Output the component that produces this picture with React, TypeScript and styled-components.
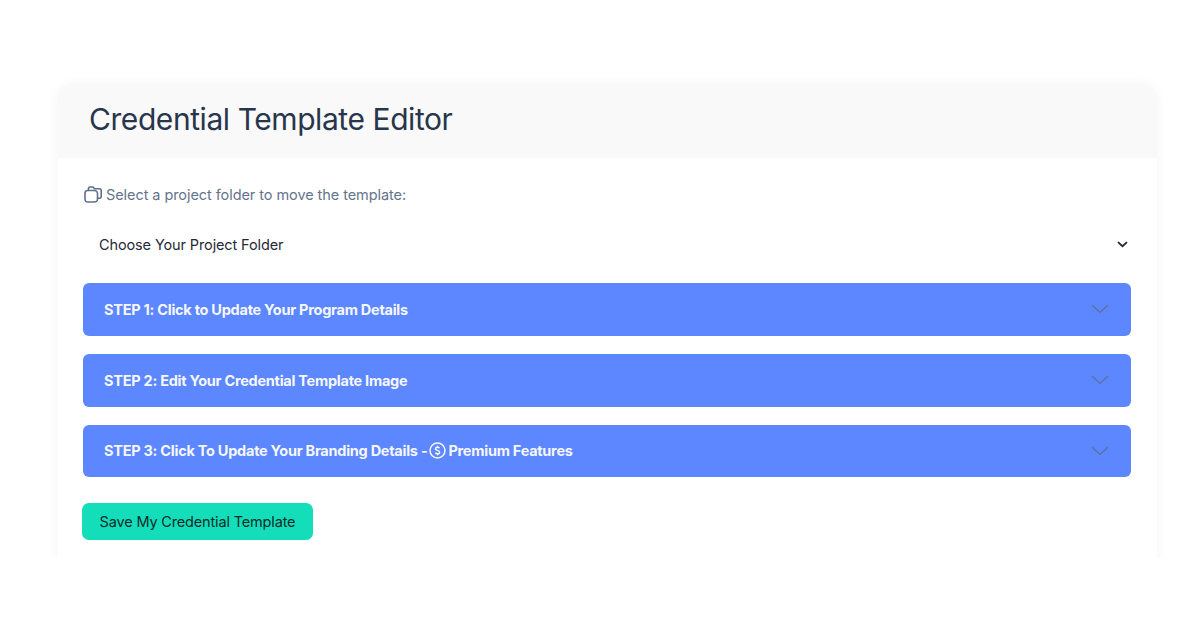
import React from "react";
import styled, { createGlobalStyle } from "styled-components";

const Global = createGlobalStyle`
  html, body { margin: 0; padding: 0; background: #fff; }
  body { font-family: "Inter", "Open Sans", sans-serif; }
`;

const Viewport = styled.div`
  height: 558px;
  overflow: hidden;
  padding: 84px 43px 0 58px;
  box-sizing: border-box;
`;

const Card = styled.section`
  height: 520px;
  background: #fff;
  border-radius: 14px 14px 0 0;
  box-shadow: 0 0 12px rgba(30, 40, 60, 0.04);
`;

const Header = styled.header`
  height: 74px;
  box-sizing: border-box;
  background: #f9f9fa;
  border-radius: 14px 14px 0 0;
  display: flex;
  align-items: center;
  padding: 0 0 4px 31px;
`;

const Title = styled.h1`
  margin: 0;
  font-size: 30px;
  font-weight: 400;
  letter-spacing: -0.43px;
  color: #27364b;
`;

const Body = styled.div`
  padding: 25px 26px 0 25px;
`;

const FolderLabel = styled.div`
  display: flex;
  align-items: center;
  gap: 4px;
  height: 22px;
  padding-left: 1px;
  font-size: 14.5px;
  letter-spacing: -0.07px;
  color: #64748b;
`;

const SelectRow = styled.div`
  display: flex;
  align-items: center;
  justify-content: space-between;
  height: 50px;
  margin-top: 14px;
  padding: 0 3px 0 16px;
  font-size: 14.5px;
  letter-spacing: -0.12px;
  color: #1f2937;
`;

const Steps = styled.div`
  display: flex;
  flex-direction: column;
  gap: 18px;
  margin-top: 14px;
`;

const Step = styled.div`
  height: 52.8px;
  box-sizing: border-box;
  background: #5d87ff;
  border-radius: 6px;
  display: flex;
  align-items: center;
  justify-content: space-between;
  padding: 0 22px 0 21px;
  font-size: 14.5px;
  font-weight: 700;
  letter-spacing: -0.26px;
  color: #f4f7ff;
`;

const StepLabel = styled.span`
  display: inline-flex;
  align-items: center;
  gap: 2px;
`;

const SaveButton = styled.button`
  display: block;
  width: 231px;
  height: 37px;
  margin: 25.6px 0 0 -1px;
  padding: 0;
  border: 0;
  border-radius: 7px;
  background: #13deb9;
  font-family: inherit;
  font-size: 14.5px;
  letter-spacing: -0.16px;
  color: #0c2a2a;
`;

const Chevron = () => (
  <svg width="18" height="10" viewBox="0 0 18 10" fill="none" stroke="#5a6f9f" strokeWidth="1.2">
    <path d="M1 1l8 7.500L17 1" />
  </svg>
);

const SmallChevron = () => (
  <svg width="11" height="7" viewBox="0 0 11 7" fill="none" stroke="#1f2937" strokeWidth="1.8">
    <path d="M1 1.200l4.500 4 4.500-4" />
  </svg>
);

const FolderIcon = () => (
  <svg width="18" height="17" viewBox="0 0 18 17" fill="none" stroke="#5f6f8c" strokeWidth="1.6" strokeLinejoin="round" style={{ flex: "none" }}>
    <path d="M4.500 4.500V2.500C4.500 1.600 5.200 1 6 1h3l1.500 1.800h5c.9 0 1.700.8 1.700 1.700v6.200c0 .9-.8 1.600-1.700 1.600H13.500" />
    <path d="M1 7.200C1 5.700 2 4.500 3.500 4.500h7C12 4.500 13.500 5.700 13.500 7.200v6.100c0 1.500-1.500 2.700-3 2.700h-7C2 16 1 14.800 1 13.300z" />
  </svg>
);

const DollarIcon = () => (
  <svg width="17" height="17" viewBox="0 0 17 17" fill="none" stroke="#f4f7ff" strokeWidth="1.5" style={{ flex: "none" }}>
    <circle cx="8.500" cy="8.500" r="7.500" />
    <path d="M10.600 6.300c-.3-.7-1.100-1.100-2.100-1.100-1.100 0-2 .6-2 1.500 0 2.100 4.100 1.200 4.100 3.500 0 1-.9 1.600-2.100 1.600-1 0-1.800-.5-2.100-1.200M8.500 3.800v1.400M8.500 11.800v1.400" />
  </svg>
);

const App = () => (
  <>
    <Global />
    <Viewport>
      <Card>
        <Header>
          <Title>Credential Template Editor</Title>
        </Header>
        <Body>
          <FolderLabel>
            <FolderIcon />
            Select a project folder to move the template:
          </FolderLabel>
          <SelectRow>
            Choose Your Project Folder
            <SmallChevron />
          </SelectRow>
          <Steps>
            <Step>
              <StepLabel>STEP 1: Click to Update Your Program Details</StepLabel>
              <Chevron />
            </Step>
            <Step>
              <StepLabel>STEP 2: Edit Your Credential Template Image</StepLabel>
              <Chevron />
            </Step>
            <Step>
              <StepLabel>
                STEP 3: Click To Update Your Branding Details -<DollarIcon />Premium Features
              </StepLabel>
              <Chevron />
            </Step>
          </Steps>
          <SaveButton>Save My Credential Template</SaveButton>
        </Body>
      </Card>
    </Viewport>
  </>
);

export default App;
